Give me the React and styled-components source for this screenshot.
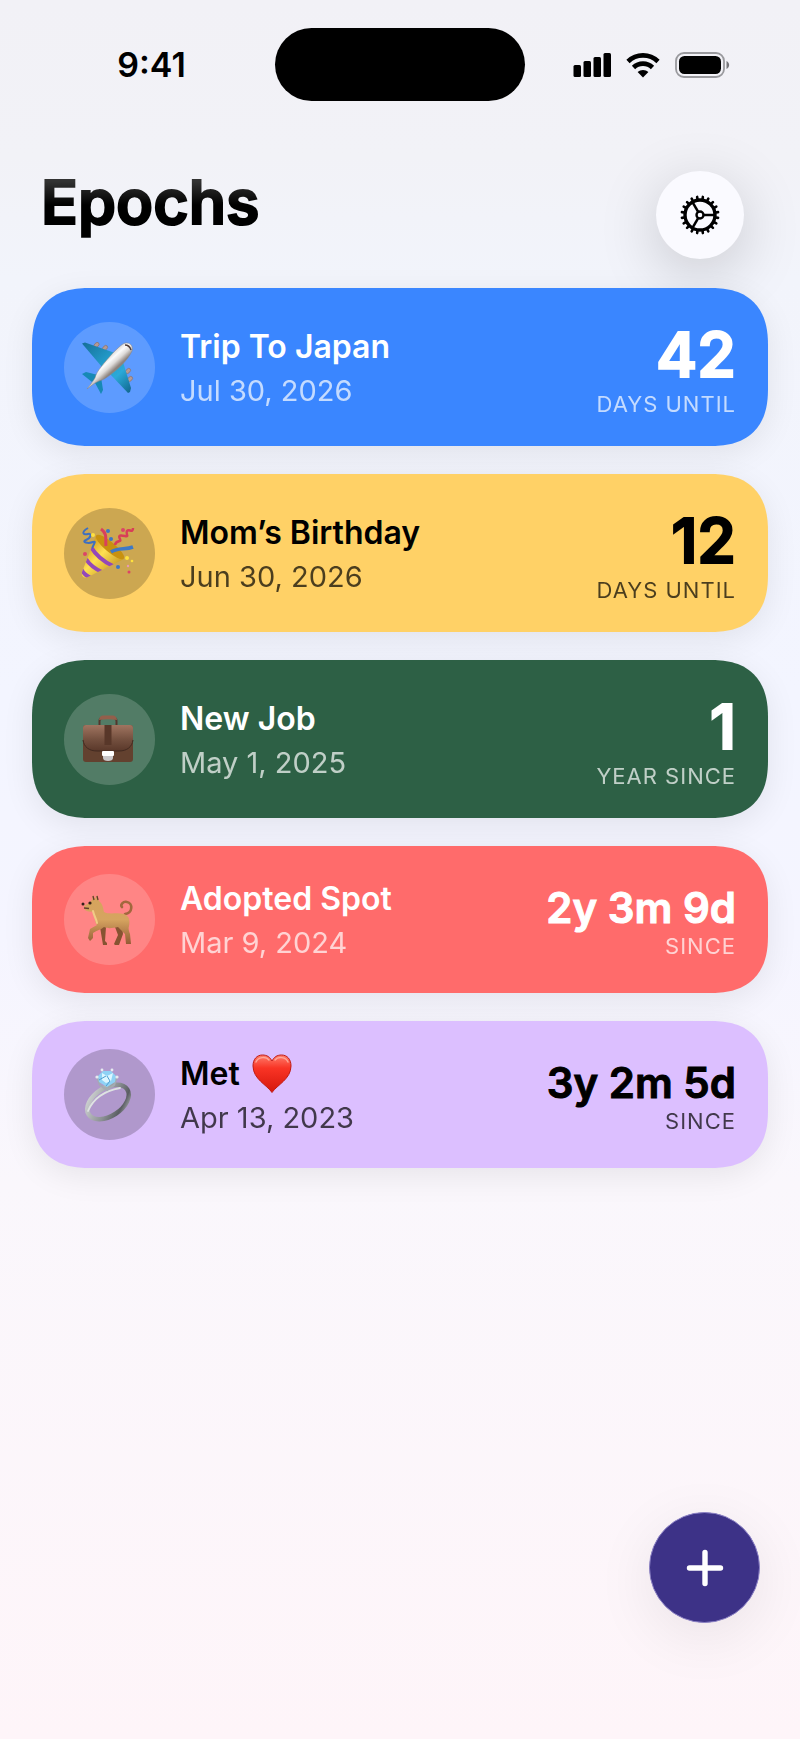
import styled, { createGlobalStyle } from 'styled-components';

const GlobalStyle = createGlobalStyle`
  * {
    box-sizing: border-box;
  }
  body {
    margin: 0;
    font-family: Inter, 'Liberation Sans', sans-serif;
    color: #000;
  }
`;

const Screen = styled.div`
  display: flex;
  flex-direction: column;
  min-height: 100vh;
  background: linear-gradient(180deg, #f2f1f6 0%, #f2f2f7 9%, #f2f4fb 16%, #f3f5ff 40%, #f5f5ff 54%, #faf7fc 68%, #fef5f9 100%);
`;

const StatusBar = styled.div`
  display: grid;
  grid-template-columns: 1fr 250px 1fr;
  align-items: center;
  padding-top: 28px;
`;

const Time = styled.div`
  padding-left: 28px;
  text-align: center;
  font-size: 34px;
  font-weight: 600;
  line-height: 40px;
`;

const Island = styled.div`
  height: 73px;
  border-radius: 37px;
  background: #000;
`;

const StatusIcons = styled.div`
  display: flex;
  align-items: center;
  gap: 15px;
  padding-left: 48px;

  svg {
    display: block;
  }
`;

const Header = styled.header`
  display: flex;
  align-items: center;
  justify-content: space-between;
  padding: 70px 56px 0 41px;
`;

const Title = styled.h1`
  margin: 0 0 18px;
  padding-bottom: 8px;
  font-size: 61px;
  font-weight: 600;
  line-height: 62px;
  color: transparent;
  -webkit-text-stroke: 2px transparent;
  background: linear-gradient(180deg, #333 10px, #000 34px);
  background-clip: text;
`;

const RoundButton = styled.button`
  display: flex;
  align-items: center;
  justify-content: center;
  flex-shrink: 0;
  padding: 0;
  border-radius: 50%;
  cursor: pointer;
`;

const SettingsButton = styled(RoundButton)`
  width: 88px;
  height: 88px;
  border: none;
  background: #fafaff;
  color: #000;
  box-shadow: 0 14px 60px rgba(0, 0, 0, 0.18);
`;

const AddButton = styled(RoundButton)`
  width: 111px;
  height: 111px;
  margin: 0 40px 116px auto;
  border: 1px solid #8a80c4;
  background: #3d3287;
  color: #fff;
  box-shadow: 0 14px 60px rgba(0, 0, 0, 0.08);
`;

const List = styled.ul`
  display: flex;
  flex-direction: column;
  flex: 1;
  gap: 28px;
  margin: 0;
  padding: 29px 32px 0;
  list-style: none;
`;

const Card = styled.li`
  display: flex;
  align-items: center;
  gap: 25px;
  padding: 24px 32px;
  min-height: ${(props) => (props.$compact ? '147px' : '158px')};
  border-radius: 50px;
  background: ${(props) => props.$background};
  color: ${(props) => (props.$dark ? '#000' : '#fff')};
  box-shadow: 0 8px 32px rgba(0, 0, 0, 0.08);

  @supports (corner-shape: superellipse(1.3)) {
    border-radius: 58px;
    corner-shape: superellipse(1.3);
  }
`;

const IconCircle = styled.div`
  display: flex;
  align-items: center;
  justify-content: center;
  flex-shrink: 0;
  width: 91px;
  height: 91px;
  padding-right: 3px;
  border-radius: 50%;
  background: ${(props) => (props.$dark ? 'rgba(0, 0, 0, 0.2)' : 'rgba(255, 255, 255, 0.18)')};
`;

const Details = styled.div`
  flex: 1;
  min-width: 0;
  padding-top: 3px;
`;

const Name = styled.h2`
  display: flex;
  align-items: center;
  gap: 12px;
  margin: 0;
  font-size: 32px;
  font-weight: 600;
  line-height: 44px;
`;

const EventDate = styled.div`
  font-size: 29px;
  line-height: 44px;
  opacity: 0.7;
`;

const Count = styled.div`
  padding-top: 8px;
  text-align: right;
`;

const Value = styled.div`
  font-size: ${(props) => (props.$compact ? '42px' : '62px')};
  font-weight: 600;
  line-height: ${(props) => (props.$compact ? '44px' : '66px')};
  -webkit-text-stroke: ${(props) => (props.$compact ? '1px' : '2px')} currentColor;
`;

const Label = styled.div`
  font-size: 22px;
  line-height: 32px;
  letter-spacing: 1px;
  opacity: 0.7;
`;

const SignalIcon = () => (
  <svg width="38" height="26" viewBox="0 0 38 26" aria-hidden="true">
    <rect x="0.5" y="13" width="7.5" height="12" rx="1.5" />
    <rect x="10.5" y="9" width="7.5" height="16" rx="1.5" />
    <rect x="20.5" y="5" width="7.5" height="20" rx="1.5" />
    <rect x="30.5" y="1" width="7.5" height="24" rx="1.5" />
  </svg>
);

const WifiIcon = () => (
  <svg width="34" height="26" viewBox="0 0 34 26" aria-hidden="true">
    <g fill="none" stroke="#000" strokeWidth="4.6">
      <path d="M2 9.5a21.5 21.5 0 0 1 30 0" />
      <path d="M7.5 15.5a13.5 13.5 0 0 1 19 0" />
    </g>
    <path d="M11.6 20a8 8 0 0 1 10.8 0L17 25.5Z" />
  </svg>
);

const BatteryIcon = () => (
  <svg width="55" height="26" viewBox="0 0 55 26" aria-hidden="true">
    <rect x="1" y="1" width="48" height="24" rx="8" fill="none" stroke="#99999d" strokeWidth="1.8" />
    <rect x="4" y="4" width="42" height="18" rx="5.5" />
    <path d="M51.5 9v8c3.5-1.5 3.5-6.5 0-8Z" fill="#77777b" />
  </svg>
);

const teeth = Array.from({ length: 20 }, (_, i) => 9 + i * 18);

const GearIcon = () => (
  <svg width="40" height="40" viewBox="-20 -20 40 40" fill="none" stroke="currentColor" aria-hidden="true">
    <circle r="15" strokeWidth="3.4" />
    {teeth.map((angle) => (
      <path key={angle} d="M16 0H18.3" strokeWidth="2.6" strokeLinecap="round" transform={`rotate(${angle})`} />
    ))}
    <circle r="3.5" strokeWidth="2.4" />
    {[0, 120, 240].map((angle) => (
      <path key={angle} d="M4 0H15" strokeWidth="2.5" transform={`rotate(${angle})`} />
    ))}
  </svg>
);

const PlusIcon = () => (
  <svg width="38" height="38" viewBox="0 0 38 38" aria-hidden="true">
    <path d="M19 3.5v31M3.5 19h31" stroke="currentColor" strokeWidth="5.4" strokeLinecap="round" />
  </svg>
);

const PlaneIcon = () => (
  <svg width="54" height="54" viewBox="0 0 54 54" aria-hidden="true">
    <defs>
      <linearGradient id="plane-body" gradientUnits="userSpaceOnUse" x1="24" y1="18" x2="34" y2="29">
        <stop offset="0" stopColor="#d5d2d0" />
        <stop offset="0.35" stopColor="#fbfbfb" />
        <stop offset="0.65" stopColor="#dedbd9" />
        <stop offset="1" stopColor="#8d837d" />
      </linearGradient>
      <linearGradient id="plane-wing" gradientUnits="userSpaceOnUse" x1="2" y1="4" x2="48" y2="52">
        <stop offset="0" stopColor="#17719a" />
        <stop offset="0.4" stopColor="#2299c8" />
        <stop offset="0.7" stopColor="#2ba9d8" />
        <stop offset="1" stopColor="#126b93" />
      </linearGradient>
    </defs>
    <g fill="#b59a94" stroke="#836b67" strokeWidth="0.6">
      <ellipse cx="15.5" cy="5" rx="3" ry="2" transform="rotate(-45 15.5 5)" />
      <ellipse cx="24" cy="8" rx="3" ry="2" transform="rotate(-45 24 8)" />
      <ellipse cx="47" cy="31" rx="3" ry="2" transform="rotate(-45 47 31)" />
      <ellipse cx="49" cy="39" rx="3" ry="2" transform="rotate(-45 49 39)" />
    </g>
    <path d="M1 3.5 4 2.5 34 13 21 27Z" fill="url(#plane-wing)" />
    <path d="m29 34 13-12 8 26-1 4-2 1Z" fill="url(#plane-wing)" />
    <path d="m1 34 4-2 12 3-6 7Z" fill="#1789b5" />
    <path d="m13 41 7-4 2 13-2 4Z" fill="#1789b5" />
    <path d="M6 49c3-4 5-6 8-11 1-4 3-7 6-11C28 17 36 8 42 4c5-3 11 1 9 7-4 9-14 18-22 24-4 3-7 5-11 6-5 2-8 5-12 8Z" fill="url(#plane-body)" stroke="#8b8580" strokeWidth="0.5" />
    <path d="M44 5c3 0 5 2 6 5" stroke="#4d3b38" strokeWidth="1.4" fill="none" />
  </svg>
);

const PartyIcon = () => (
  <svg width="54" height="54" viewBox="0 0 54 54" aria-hidden="true">
    <defs>
      <linearGradient id="party-cone" x1="0" y1="0" x2="1" y2="1">
        <stop offset="0.1" stopColor="#c98d12" />
        <stop offset="0.45" stopColor="#ffe052" />
        <stop offset="1" stopColor="#a9740a" />
      </linearGradient>
      <clipPath id="party-clip">
        <path d="M15 10 1 46c-1 4 2 7 6 5l36-18c-5-10-15-19-28-23Z" />
      </clipPath>
    </defs>
    <path d="M15 10 1 46c-1 4 2 7 6 5l36-18c-5-10-15-19-28-23Z" fill="url(#party-cone)" />
    <g clipPath="url(#party-clip)" fill="none" stroke="#9448b8" strokeWidth="4">
      <path d="M10 21q7 12 22 19M5 33q5 8 16 13M0 43q3 6 10 9" />
    </g>
    <ellipse cx="29" cy="21" rx="18" ry="5" transform="rotate(40 29 21)" fill="#c8910f" />
    <path d="M25 20c-1-7 2-12-5-17" fill="none" stroke="#d9405d" strokeWidth="3" />
    <path d="M30 26c7-5 14-2 22-5" fill="none" stroke="#3e79c5" strokeWidth="3.5" />
    <path d="M7 2C-1 7 3 9 7 8s3 4-2 6 2 4 7 2-2 5 0 6" fill="none" stroke="#3e6fc0" strokeWidth="2" />
    <path d="M52 2c0 6-4 0-6 3s3 6-2 5-7-1-5 3-4 0-5 6" fill="none" stroke="#d93d57" strokeWidth="2.5" />
    <g fill="#3d75c5">
      <circle cx="27" cy="5" r="2" />
      <circle cx="30" cy="13" r="2" />
      <circle cx="37" cy="41" r="2" />
    </g>
    <g fill="#dc4467">
      <circle cx="4" cy="28" r="2" />
      <circle cx="42" cy="4" r="2" />
      <circle cx="48" cy="46" r="1.5" />
    </g>
    <g fill="#ffe13d">
      <circle cx="12" cy="9" r="2" />
      <circle cx="46" cy="32" r="2" />
      <circle cx="51" cy="35" r="1.3" />
    </g>
    <circle cx="47" cy="40" r="1.2" fill="#e79bb6" />
  </svg>
);

const BriefcaseIcon = () => (
  <svg width="52" height="52" viewBox="0 0 52 52" aria-hidden="true">
    <defs>
      <linearGradient id="case-body" x1="0" y1="0" x2="0" y2="1">
        <stop offset="0" stopColor="#a07460" />
        <stop offset="0.55" stopColor="#74503f" />
        <stop offset="1" stopColor="#5a382a" />
      </linearGradient>
    </defs>
    <path d="M17.5 12V8c0-2 1-3 3-3h11c2 0 3 1 3 3v4" fill="none" stroke="#53362c" strokeWidth="2" />
    <path d="M17 7c0-2.5 2-4.5 4-4.5h10c2 0 4 2 4 4.5-6-1-12-1-18 0Z" fill="#935f4b" />
    <rect x="1" y="12" width="50" height="37" rx="3" fill="#63412f" />
    <path d="M1 15c0-2 1-3 3-3h44c2 0 3 1 3 3v10c0 9-5 13-14 13H15C6 38 1 34 1 25Z" fill="url(#case-body)" />
    <path d="M1 27c1 7 6 11 14 11h22c8 0 13-4 14-11" fill="none" stroke="#422a20" strokeWidth="1" />
    <path d="M22.5 12h7v20h-7Z" fill="#583729" />
    <rect x="20" y="38" width="12" height="5" rx="1" fill="#fff" />
    <path d="M21 43h10v2c0 2-2 3-5 3s-5-1-5-3Z" fill="#c9c7c9" />
  </svg>
);

const DogIcon = () => (
  <svg width="54" height="54" viewBox="0 0 54 54" aria-hidden="true">
    <defs>
      <linearGradient id="dog-body" x1="0" y1="0" x2="0" y2="1">
        <stop offset="0" stopColor="#d5a45c" />
        <stop offset="0.5" stopColor="#d6a460" />
        <stop offset="1" stopColor="#935b35" />
      </linearGradient>
    </defs>
    <path d="M19 34 22 52h4v-2l-2-2 1-14ZM34 34l3 8-4 9 1 1h4l4-11-1-8Z" fill="#875331" />
    <path d="M44 21c8-1 8-11 2-12-4-1-7 3-5 5" fill="none" stroke="#a2683d" strokeWidth="2.6" strokeLinecap="round" />
    <path d="M11 7 12 2l2 4 2-4 2 6c4 3 4 7 5 11 6 3 12 0 20 2 6 2 6 8 5 12-1 3 0 5 1 8l1 10h-5l-1-10-7-7c-5 1-10 2-14 0-3 3-7 3-11 6v5l-3 3-2-3 2-9 7-4c-3-4-2-10-3-14-3 1-6 1-9-1l-1-4 5-3Z" fill="url(#dog-body)" />
    <path d="M12 18c1 5 3 7 4 12" stroke="#f0cc86" strokeWidth="2" fill="none" strokeLinecap="round" />
    <path d="m12 3 1 4M16 3l1 4" stroke="#633d2c" strokeWidth="1.3" />
    <circle cx="9" cy="10" r="1.6" fill="#382317" />
    <circle cx="2" cy="11" r="1.5" fill="#352019" />
    <path d="m3 15 5 .5" stroke="#633d2c" strokeWidth="1.5" />
  </svg>
);

const RingIcon = () => (
  <svg width="54" height="54" viewBox="0 0 54 54" aria-hidden="true">
    <defs>
      <linearGradient id="ring-band" x1="0" y1="0" x2="1" y2="1">
        <stop offset="0" stopColor="#d9dcdc" />
        <stop offset="0.55" stopColor="#8a8f92" />
        <stop offset="0.8" stopColor="#5a5d62" />
        <stop offset="1" stopColor="#b9bdbf" />
      </linearGradient>
    </defs>
    <ellipse cx="27" cy="34" rx="23" ry="14" transform="rotate(-33 27 34)" fill="none" stroke="url(#ring-band)" strokeWidth="4.5" />
    <path d="M7 43c5-12 16-20 32-23" fill="none" stroke="#dee3e2" strokeWidth="1.8" strokeLinecap="round" />
    <path d="M16 9l3 8 7 5 7-5 3-8M26 22v-6" fill="none" stroke="#a4abb2" strokeWidth="2" />
    <path d="m17 8 5-5h8l5 5-1 6-8 5-8-5Z" fill="#8fd2f5" />
    <path d="m21 5 5 3 6-3-2 8-5 2-4-3Z" fill="#dcf6ff" />
    <path d="m26 8 3 5-4 5M18 12l7-4" stroke="#4d9ed0" strokeWidth="1" fill="none" />
    <g fill="#e6ebef">
      <circle cx="21" cy="2" r="1.4" />
      <circle cx="31" cy="2" r="1.4" />
      <circle cx="16" cy="9" r="1.6" />
      <circle cx="36" cy="9" r="1.6" />
    </g>
  </svg>
);

const HeartIcon = () => (
  <svg width="40" height="40" viewBox="0 0 40 40" role="img" aria-label="love">
    <defs>
      <linearGradient id="heart-fill" x1="0" y1="0" x2="0" y2="1">
        <stop offset="0" stopColor="#ff7d6c" />
        <stop offset="0.35" stopColor="#f93425" />
        <stop offset="1" stopColor="#d5160c" />
      </linearGradient>
    </defs>
    <path d="M20 38.5C15 31 1 25 1 12 1 5 5 1 10.5 1 15 1 18 3 20 7c2-4 5-6 9.5-6C35 1 39 5 39 12c0 13-14 19-19 26.5Z" fill="url(#heart-fill)" stroke="#bf1b12" strokeWidth="1" />
    <path d="M4 8c2-5 10-6 13-2M23 6c3-4 11-3 13 2" fill="none" stroke="#ffc0b2" strokeWidth="1.5" strokeLinecap="round" opacity="0.7" />
  </svg>
);

const events = [
  { name: 'Trip To Japan', date: 'Jul 30, 2026', value: '42', label: 'DAYS UNTIL', background: '#3a86ff', Icon: PlaneIcon },
  { name: 'Mom’s Birthday', date: 'Jun 30, 2026', value: '12', label: 'DAYS UNTIL', background: '#ffd166', dark: true, Icon: PartyIcon },
  { name: 'New Job', date: 'May 1, 2025', value: '1', label: 'YEAR SINCE', background: '#2d6045', Icon: BriefcaseIcon },
  { name: 'Adopted Spot', date: 'Mar 9, 2024', value: '2y 3m 9d', label: 'SINCE', background: '#ff6b6b', compact: true, Icon: DogIcon },
  { name: 'Met', heart: true, date: 'Apr 13, 2023', value: '3y 2m 5d', label: 'SINCE', background: '#dcbfff', dark: true, compact: true, Icon: RingIcon },
];

const App = () => {
  return (
    <Screen>
      <GlobalStyle />
      <StatusBar>
        <Time>9:41</Time>
        <Island />
        <StatusIcons>
          <SignalIcon />
          <WifiIcon />
          <BatteryIcon />
        </StatusIcons>
      </StatusBar>
      <Header>
        <Title>Epochs</Title>
        <SettingsButton type="button" aria-label="Settings">
          <GearIcon />
        </SettingsButton>
      </Header>
      <List>
        {events.map(({ name, heart, date, value, label, background, dark, compact, Icon }) => (
          <Card key={name} $background={background} $dark={dark} $compact={compact}>
            <IconCircle $dark={dark}>
              <Icon />
            </IconCircle>
            <Details>
              <Name>
                {name}
                {heart && <HeartIcon />}
              </Name>
              <EventDate>{date}</EventDate>
            </Details>
            <Count>
              <Value $compact={compact}>{value}</Value>
              <Label>{label}</Label>
            </Count>
          </Card>
        ))}
      </List>
      <AddButton type="button" aria-label="Add event">
        <PlusIcon />
      </AddButton>
    </Screen>
  );
};

export default App;
